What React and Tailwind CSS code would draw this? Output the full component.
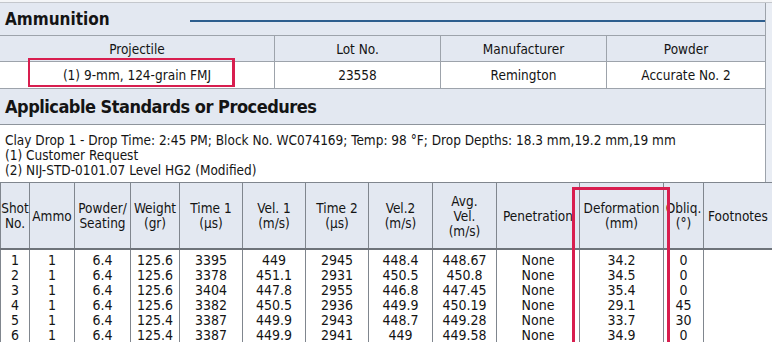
import React from "react";

// Column layout of the shot table (widths in px, summed to 772)
const cols = [
  { w: "w-[29px]", label: ["Shot", "No."] },
  { w: "w-[45px]", label: ["Ammo"] },
  { w: "w-[56px]", label: ["Powder/", "Seating"] },
  { w: "w-[49px]", label: ["Weight", "(gr)"] },
  { w: "w-[63px]", label: ["Time 1", "(µs)"] },
  { w: "w-[63px]", label: ["Vel. 1", "(m/s)"] },
  { w: "w-[63px]", label: ["Time 2", "(µs)"] },
  { w: "w-[64px]", label: ["Vel.2", "(m/s)"] },
  { w: "w-[64px]", label: ["Avg.", "Vel.", "(m/s)"] },
  { w: "w-[83px]", label: ["Penetration"] },
  { w: "w-[84px]", label: ["Deformation", "(mm)"] },
  { w: "w-[40px]", label: ["Obliq.", "(°)"] },
  { w: "w-[69px]", label: ["Footnotes"] },
];

const shots = [
  ["1", "1", "6.4", "125.6", "3395", "449", "2945", "448.4", "448.67", "None", "34.2", "0", ""],
  ["2", "1", "6.4", "125.6", "3378", "451.1", "2931", "450.5", "450.8", "None", "34.5", "0", ""],
  ["3", "1", "6.4", "125.6", "3404", "447.8", "2955", "446.8", "447.45", "None", "35.4", "0", ""],
  ["4", "1", "6.4", "125.6", "3382", "450.5", "2936", "449.9", "450.19", "None", "29.1", "45", ""],
  ["5", "1", "6.4", "125.4", "3387", "449.9", "2943", "448.7", "449.28", "None", "33.7", "30", ""],
  ["6", "1", "6.4", "125.4", "3387", "449.9", "2941", "449", "449.58", "None", "34.9", "0", ""],
];

export default function App() {
  return (
    <div className="relative w-[772px] h-[342px] overflow-hidden bg-[#e9edf4] text-[#141414] font-['DejaVu_Sans_Condensed','DejaVu_Sans',sans-serif]">
      {/* top edge of the page above */}
      <div className="h-[3px] border-b border-[#c4c7cc] bg-[#f4f5f7]" />

      <div className="w-[766px] border-r border-[#9da3ab]">
        {/* Ammunition section */}
        <div className="h-[33px] flex items-center bg-[#e3e8f1] border-b border-[#9da3ab]">
          <span className="pl-[5px] text-[17px] font-bold leading-none">Ammunition</span>
          <div className="ml-[80px] mt-[3px] flex-1 h-[2px] bg-[#2d5e8e]" />
        </div>
        <div className="grid grid-cols-[275px_166px_166px_1fr] text-[13.5px]">
          {["Projectile", "Lot No.", "Manufacturer", "Powder"].map((h, i) => (
            <div
              key={h}
              className={`h-[26px] pt-[2px] flex items-center justify-center bg-[#e3e8f1] border-b border-[#9da3ab] ${i < 3 ? "border-r" : ""}`}
            >
              {h}
            </div>
          ))}
          {["(1) 9-mm, 124-grain FMJ", "23558", "Remington", "Accurate No. 2"].map((v, i) => (
            <div
              key={v}
              className={`h-[27px] flex items-center justify-center bg-white border-b border-[#9da3ab] ${i < 3 ? "border-r" : ""}`}
            >
              {v}
            </div>
          ))}
        </div>

        {/* Standards section */}
        <div className="h-[36px] flex items-center bg-[#e3e8f1] border-b border-[#8e949c]">
          <span className="pl-[5px] text-[18px] tracking-[-0.5px] font-bold leading-none">
            Applicable Standards or Procedures
          </span>
        </div>
        <div className="h-[57px] bg-white pl-[5px] pt-[8px] text-[13.5px] leading-[15px]">
          <div>Clay Drop 1 - Drop Time: 2:45 PM; Block No. WC074169; Temp: 98 °F; Drop Depths: 18.3 mm,19.2 mm,19 mm</div>
          <div>(1) Customer Request</div>
          <div>(2) NIJ-STD-0101.07 Level HG2 (Modified)</div>
        </div>
      </div>

      {/* Shot table */}
      <table className="table-fixed border-collapse w-[772px] text-[13.5px]">
        <thead>
          <tr className="h-[66px] bg-[#e3e8f1]">
            {cols.map((c, i) => (
              <th
                key={i}
                className={`${c.w} p-0 pt-[2px] font-normal leading-[15px] border border-[#80868e] border-b-2 border-b-[#6e737a] text-center whitespace-nowrap`}
              >
                {c.label.map((l) => (
                  <div key={l}>{l}</div>
                ))}
              </th>
            ))}
          </tr>
        </thead>
        <tbody className="bg-white text-[14px]">
          {shots.map((r, ri) => (
            <tr key={ri}>
              {r.map((v, ci) => (
                <td
                  key={ci}
                  className={`p-0 ${ri === 0 ? "pt-[3px]" : ""} leading-[15px] text-center border-x border-[#80868e] whitespace-nowrap`}
                >
                  {v}
                </td>
              ))}
            </tr>
          ))}
        </tbody>
      </table>

      {/* red highlight boxes drawn over the report */}
      <div className="absolute left-[28px] top-[58px] w-[207px] h-[29px] border-2 border-[#d81e4f] border-r-[3px]" />
      <div className="absolute left-[572px] top-[187px] w-[98px] h-[170px] border-[3px] border-[#d81e4f]" />
    </div>
  );
}
